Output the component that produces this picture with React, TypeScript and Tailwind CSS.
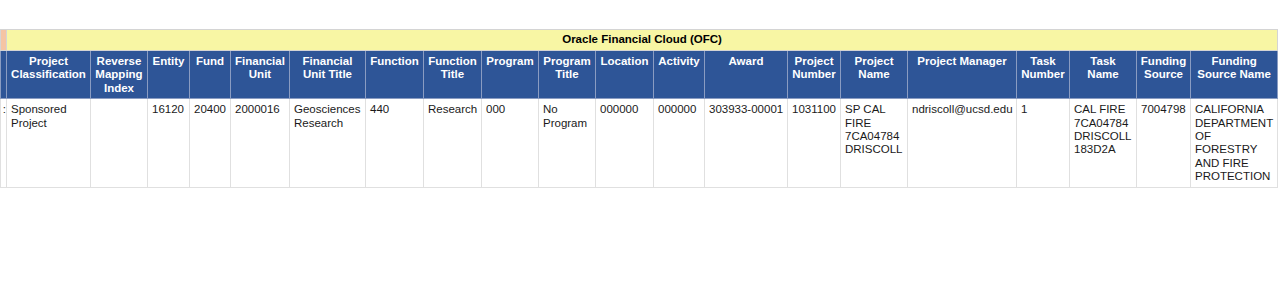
import React from "react";

type Col = { w: number; head: string[]; cell: string[] };

const COLS: Col[] = [
  { w: 84, head: ["Project", "Classification"], cell: ["Sponsored", "Project"] },
  { w: 57, head: ["Reverse", "Mapping", "Index"], cell: [] },
  { w: 42, head: ["Entity"], cell: ["16120"] },
  { w: 41, head: ["Fund"], cell: ["20400"] },
  { w: 59, head: ["Financial", "Unit"], cell: ["2000016"] },
  { w: 76, head: ["Financial", "Unit Title"], cell: ["Geosciences", "Research"] },
  { w: 58, head: ["Function"], cell: ["440"] },
  { w: 58, head: ["Function", "Title"], cell: ["Research"] },
  { w: 57, head: ["Program"], cell: ["000"] },
  { w: 57, head: ["Program", "Title"], cell: ["No", "Program"] },
  { w: 58, head: ["Location"], cell: ["000000"] },
  { w: 51, head: ["Activity"], cell: ["000000"] },
  { w: 83, head: ["Award"], cell: ["303933-00001"] },
  { w: 53, head: ["Project", "Number"], cell: ["1031100"] },
  { w: 67, head: ["Project", "Name"], cell: ["SP CAL", "FIRE", "7CA04784", "DRISCOLL"] },
  { w: 109, head: ["Project Manager"], cell: ["ndriscoll@ucsd.edu"] },
  { w: 53, head: ["Task", "Number"], cell: ["1"] },
  { w: 67, head: ["Task", "Name"], cell: ["CAL FIRE", "7CA04784", "DRISCOLL", "183D2A"] },
  { w: 54, head: ["Funding", "Source"], cell: ["7004798"] },
  {
    w: 87,
    head: ["Funding", "Source Name"],
    cell: ["CALIFORNIA", "DEPARTMENT", "OF", "FORESTRY", "AND FIRE", "PROTECTION"],
  },
];

const Lines = ({ lines }: { lines: string[] }) => (
  <>
    {lines.map((l, i) => (
      <div key={i} className="whitespace-nowrap">
        {l}
      </div>
    ))}
  </>
);

export default function App() {
  return (
    <div
      className="w-[1280px] h-[286px] bg-white overflow-hidden pt-[29px] text-[11.5px] leading-[13.4px]"
      style={{ fontFamily: '"Liberation Sans", Arial, Helvetica, sans-serif' }}
    >
      <table className="table-fixed border-collapse w-[1278px]">
        <colgroup>
          <col style={{ width: 6 }} />
          {COLS.map((c, i) => (
            <col key={i} style={{ width: c.w }} />
          ))}
        </colgroup>
        <tbody>
          {/* GROUP ROW */}
          <tr className="h-[21px]">
            <td className="border border-[#d4d4d4] bg-[#f5c4a4] p-0" />
            <td
              colSpan={COLS.length}
              className="border border-[#d4d4d4] bg-[#f8f6a4] py-0 text-center font-bold text-black"
            >
              Oracle Financial Cloud (OFC)
            </td>
          </tr>

          {/* HEADER ROW */}
          <tr>
            <td className="border border-[#8a9cc2] bg-[#2e5597] p-0" />
            {COLS.map((c, i) => (
              <td
                key={i}
                className="border border-[#8a9cc2] bg-[#2e5597] px-[3px] pt-[4px] pb-[3px] h-[48px] align-top text-center font-bold text-white overflow-hidden"
              >
                <Lines lines={c.head} />
              </td>
            ))}
          </tr>

          {/* DATA ROW */}
          <tr>
            <td className="border border-[#e0e0e0] p-0 align-top overflow-hidden">
              <div className="pt-[4px] text-right text-[#222]">:</div>
            </td>
            {COLS.map((c, i) => (
              <td
                key={i}
                className="border border-[#e0e0e0] px-[4px] pt-[4px] pb-[3px] h-[89px] align-top text-left text-[#1a1a1a] overflow-hidden"
              >
                <Lines lines={c.cell} />
              </td>
            ))}
          </tr>
        </tbody>
      </table>
    </div>
  );
}
